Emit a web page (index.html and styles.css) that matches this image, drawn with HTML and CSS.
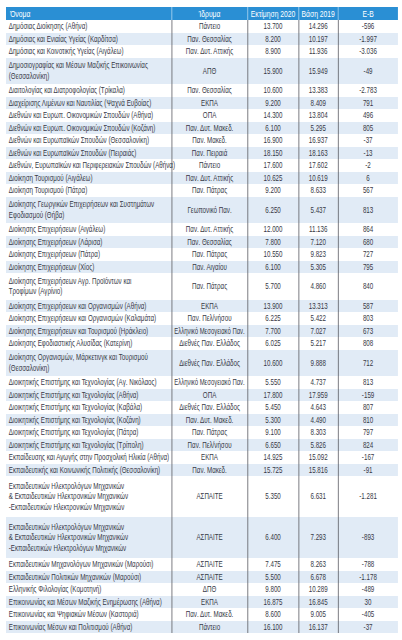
FILE: index.html
```html
<!DOCTYPE html>
<html lang="el">
<head>
<meta charset="utf-8">
<title>Βάσεις 2020</title>
<link rel="stylesheet" href="styles.css">
</head>
<body>
<div class="page">
<div class="narrow">
<table class="grid">
<colgroup>
<col class="c-name"><col class="c-inst"><col class="c-est"><col class="c-base"><col class="c-diff">
</colgroup>
<thead>
<tr><th class="name">Όνομα</th><th>Ίδρυμα</th><th>Εκτίμηση 2020</th><th>Βάση 2019</th><th>Ε-Β</th></tr>
</thead>
<tbody>
<tr><td class="name">Δημόσιας Διοίκησης (Αθήνα)</td><td>Πάντειο</td><td>13.700</td><td>14.296</td><td>-596</td></tr>
<tr><td class="name">Δημόσιας και Ενιαίας Υγείας (Καρδίτσα)</td><td>Παν. Θεσσαλίας</td><td>8.200</td><td>10.197</td><td>-1.997</td></tr>
<tr><td class="name">Δημόσιας και Κοινοτικής Υγείας (Αιγάλεω)</td><td>Παν. Δυτ. Αττικής</td><td>8.900</td><td>11.936</td><td>-3.036</td></tr>
<tr class="two"><td class="name">Δημοσιογραφίας και Μέσων Μαζικής Επικοινωνίας<br>(Θεσσαλονίκη)</td><td>ΑΠΘ</td><td>15.900</td><td>15.949</td><td>-49</td></tr>
<tr><td class="name">Διαιτολογίας και Διατροφολογίας (Τρίκαλα)</td><td>Παν. Θεσσαλίας</td><td>10.600</td><td>13.383</td><td>-2.783</td></tr>
<tr><td class="name">Διαχείρισης Λιμένων και Ναυτιλίας (Ψαχνά Ευβοίας)</td><td>ΕΚΠΑ</td><td>9.200</td><td>8.409</td><td>791</td></tr>
<tr><td class="name">Διεθνών και Ευρωπ. Οικονομικών Σπουδών (Αθήνα)</td><td>ΟΠΑ</td><td>14.300</td><td>13.804</td><td>496</td></tr>
<tr><td class="name">Διεθνών και Ευρωπ. Οικονομικών Σπουδών (Κοζάνη)</td><td>Παν. Δυτ. Μακεδ.</td><td>6.100</td><td>5.295</td><td>805</td></tr>
<tr><td class="name">Διεθνών και Ευρωπαϊκών Σπουδών (Θεσσαλονίκη)</td><td>Παν. Μακεδ.</td><td>16.900</td><td>16.937</td><td>-37</td></tr>
<tr><td class="name">Διεθνών και Ευρωπαϊκών Σπουδών (Πειραιάς)</td><td>Παν. Πειραιά</td><td>18.150</td><td>18.163</td><td>-13</td></tr>
<tr><td class="name">Διεθνών, Ευρωπαϊκών και Περιφερειακών Σπουδών (Αθήνα)</td><td>Πάντειο</td><td>17.600</td><td>17.602</td><td>-2</td></tr>
<tr><td class="name">Διοίκηση Τουρισμού (Αιγάλεω)</td><td>Παν. Δυτ. Αττικής</td><td>10.625</td><td>10.619</td><td>6</td></tr>
<tr><td class="name">Διοίκηση Τουρισμού (Πάτρα)</td><td>Παν. Πάτρας</td><td>9.200</td><td>8.633</td><td>567</td></tr>
<tr class="two"><td class="name">Διοίκησης Γεωργικών Επιχειρήσεων και Συστημάτων<br>Εφοδιασμού (Θήβα)</td><td>Γεωπονικό Παν.</td><td>6.250</td><td>5.437</td><td>813</td></tr>
<tr><td class="name">Διοίκησης Επιχειρήσεων (Αιγάλεω)</td><td>Παν. Δυτ. Αττικής</td><td>12.000</td><td>11.136</td><td>864</td></tr>
<tr><td class="name">Διοίκησης Επιχειρήσεων (Λάρισα)</td><td>Παν. Θεσσαλίας</td><td>7.800</td><td>7.120</td><td>680</td></tr>
<tr><td class="name">Διοίκησης Επιχειρήσεων (Πάτρα)</td><td>Παν. Πάτρας</td><td>10.550</td><td>9.823</td><td>727</td></tr>
<tr><td class="name">Διοίκησης Επιχειρήσεων (Χίος)</td><td>Παν. Αιγαίου</td><td>6.100</td><td>5.305</td><td>795</td></tr>
<tr class="two"><td class="name">Διοίκησης Επιχειρήσεων Αγρ. Προϊόντων και<br>Τροφίμων (Αγρίνιο)</td><td>Παν. Πάτρας</td><td>5.700</td><td>4.860</td><td>840</td></tr>
<tr><td class="name">Διοίκησης Επιχειρήσεων και Οργανισμών (Αθήνα)</td><td>ΕΚΠΑ</td><td>13.900</td><td>13.313</td><td>587</td></tr>
<tr><td class="name">Διοίκησης Επιχειρήσεων και Οργανισμών (Καλαμάτα)</td><td>Παν. Πελ/νήσου</td><td>6.225</td><td>5.422</td><td>803</td></tr>
<tr><td class="name">Διοίκησης Επιχειρήσεων και Τουρισμού (Ηράκλειο)</td><td class="small">Ελληνικό Μεσογειακό Παν.</td><td>7.700</td><td>7.027</td><td>673</td></tr>
<tr><td class="name">Διοίκησης Εφοδιαστικής Αλυσίδας (Κατερίνη)</td><td>Διεθνές Παν. Ελλάδος</td><td>6.025</td><td>5.217</td><td>808</td></tr>
<tr class="two"><td class="name">Διοίκησης Οργανισμών, Μάρκετινγκ και Τουρισμού<br>(Θεσσαλονίκη)</td><td>Διεθνές Παν. Ελλάδος</td><td>10.600</td><td>9.888</td><td>712</td></tr>
<tr><td class="name">Διοικητικής Επιστήμης και Τεχνολογίας (Αγ. Νικόλαος)</td><td class="small">Ελληνικό Μεσογειακό Παν.</td><td>5.550</td><td>4.737</td><td>813</td></tr>
<tr><td class="name">Διοικητικής Επιστήμης και Τεχνολογίας (Αθήνα)</td><td>ΟΠΑ</td><td>17.800</td><td>17.959</td><td>-159</td></tr>
<tr><td class="name">Διοικητικής Επιστήμης και Τεχνολογίας (Καβάλα)</td><td>Διεθνές Παν. Ελλάδος</td><td>5.450</td><td>4.643</td><td>807</td></tr>
<tr><td class="name">Διοικητικής Επιστήμης και Τεχνολογίας (Κοζάνη)</td><td>Παν. Δυτ. Μακεδ.</td><td>5.300</td><td>4.490</td><td>810</td></tr>
<tr><td class="name">Διοικητικής Επιστήμης και Τεχνολογίας (Πάτρα)</td><td>Παν. Πάτρας</td><td>9.100</td><td>8.303</td><td>797</td></tr>
<tr><td class="name">Διοικητικής Επιστήμης και Τεχνολογίας (Τρίπολη)</td><td>Παν. Πελ/νήσου</td><td>6.650</td><td>5.826</td><td>824</td></tr>
<tr><td class="name">Εκπαίδευσης και Αγωγής στην Προσχολική Ηλικία (Αθήνα)</td><td>ΕΚΠΑ</td><td>14.925</td><td>15.092</td><td>-167</td></tr>
<tr><td class="name">Εκπαιδευτικής και Κοινωνικής Πολιτικής (Θεσσαλονίκη)</td><td>Παν. Μακεδ.</td><td>15.725</td><td>15.816</td><td>-91</td></tr>
<tr class="three"><td class="name">Εκπαιδευτικών Ηλεκτρολόγων Μηχανικών<br>&amp; Εκπαιδευτικών Ηλεκτρονικών Μηχανικών<br>-Εκπαιδευτικών Ηλεκτρονικών Μηχανικών</td><td>ΑΣΠΑΙΤΕ</td><td>5.350</td><td>6.631</td><td>-1.281</td></tr>
<tr class="three"><td class="name">Εκπαιδευτικών Ηλεκτρολόγων Μηχανικών<br>&amp; Εκπαιδευτικών Ηλεκτρονικών Μηχανικών<br>-Εκπαιδευτικών Ηλεκτρολόγων Μηχανικών</td><td>ΑΣΠΑΙΤΕ</td><td>6.400</td><td>7.293</td><td>-893</td></tr>
<tr><td class="name">Εκπαιδευτικών Μηχανολόγων Μηχανικών (Μαρούσι)</td><td>ΑΣΠΑΙΤΕ</td><td>7.475</td><td>8.263</td><td>-788</td></tr>
<tr><td class="name">Εκπαιδευτικών Πολιτικών Μηχανικών (Μαρούσι)</td><td>ΑΣΠΑΙΤΕ</td><td>5.500</td><td>6.678</td><td>-1.178</td></tr>
<tr><td class="name">Ελληνικής Φιλολογίας (Κομοτηνή)</td><td>ΔΠΘ</td><td>9.800</td><td>10.289</td><td>-489</td></tr>
<tr><td class="name">Επικοινωνίας και Μέσων Μαζικής Ενημέρωσης (Αθήνα)</td><td>ΕΚΠΑ</td><td>16.875</td><td>16.845</td><td>30</td></tr>
<tr><td class="name">Επικοινωνίας και Ψηφιακών Μέσων (Καστοριά)</td><td>Παν. Δυτ. Μακεδ.</td><td>8.600</td><td>9.005</td><td>-405</td></tr>
<tr><td class="name">Επικοινωνίας Μέσων και Πολιτισμού (Αθήνα)</td><td>Πάντειο</td><td>16.100</td><td>16.137</td><td>-37</td></tr>
</tbody>
</table>
</div>
</div>
</body>
</html>
```

FILE: styles.css
```css
html, body {
  margin: 0;
  padding: 0;
  background: #ffffff;
}

.page {
  padding: 7px 0 0 6px;
  width: 396px;
  overflow: hidden;
}

/* the source uses a condensed face: draw the table wide, then narrow it */
.narrow {
  width: 568px;
  transform: scaleX(0.69);
  transform-origin: 0 0;
}

.grid {
  width: 568px;
  table-layout: fixed;
  border-collapse: collapse;
  font-family: "Liberation Sans", Arial, sans-serif;
  font-size: 9px;
  color: #383a47;
}

.c-name { width: 240px; }
.c-inst { width: 110px; }
.c-est { width: 74px; }
.c-base { width: 57px; }
.c-diff { width: 87px; }

.grid th {
  background: #2a8fd4;
  color: #ffffff;
  font-weight: normal;
  font-size: 9.8px;
  height: 13px;
  padding: 0 3px;
  line-height: 13px;
  text-align: center;
  border-left: 1.5px solid #9fcdee;
  white-space: nowrap;
}

.grid th.name {
  text-align: left;
  border-left: none;
  padding-left: 6px;
}

.grid td {
  height: 12.5px;
  line-height: 10.5px;
  padding: 0 2px;
  text-align: center;
  vertical-align: middle;
  white-space: nowrap;
  border-left: 1.6px solid #42434b;
}

.grid td.name {
  text-align: left;
  border-left: none;
  padding-left: 4px;
}

.grid td.small {
  font-size: 8.6px;
  padding: 0;
}

.grid tbody tr:nth-child(even) td {
  background: #e1ebf6;
}

.grid tr.two td {
  height: 26.5px;
}

.grid tr.three td {
  height: 41px;
}
```
